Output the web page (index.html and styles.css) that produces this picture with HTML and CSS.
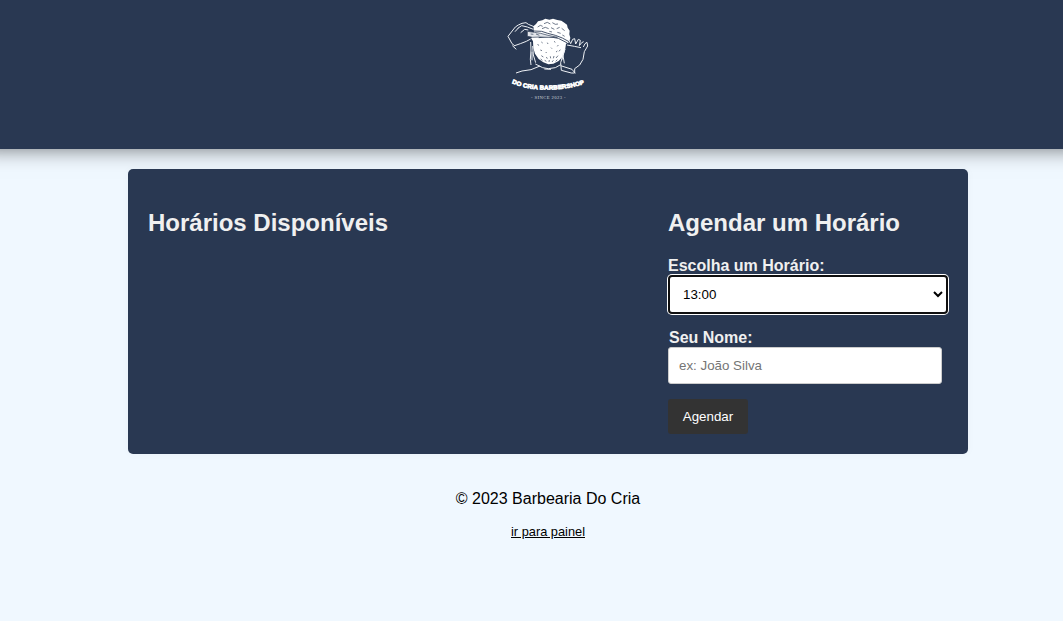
FILE: index.html
```html
<!DOCTYPE html>
<html lang="pt-BR">
<head>
<meta charset="utf-8">
<title>Barbearia Do Cria</title>
<link rel="stylesheet" href="styles.css">
</head>
<body>
<header class="header">
  <svg class="logo" viewBox="0 0 300 300" role="img" aria-label="Do Cria Barbershop">
    <path class="hair" d="M108 66 L106 49 L114 42 L120 34 L133 31 L142 26 L154 29 L165 26 L178 30 L190 32 L199 38 L207 44 L209 53 L215 62 L214 73 L217 84 L213 97 L204 101 L201 122 L194 140 L182 153 L166 161 L151 163 L136 157 L122 147 L111 131 L106 114 L105 94 L99 84 L108 78Z"/>
    <g class="shade">
      <path d="M108 63 L131 64 L149 70 L172 76 L193 84 L213 95 M122 83 L152 80 L181 85 L208 99"/>
      <path class="fleck" d="M119 51 l8-5 7 3 M138 41 l10-4 9 5 M163 38 l9 5 8-1 M132 56 l10-4 10 4 M159 53 l10 5 M176 56 l9-4 M191 55 l9 7 M154 64 l8 2 M178 67 l10 3 M193 75 l7 4 M119 102 l3 5 M130 96 l4 3 M148 98 l2 4 M168 94 l4 3 M181 105 l-3 4 M159 113 l3 3 M127 120 l5 2 M143 126 l3 3 M174 126 l4-3 M187 119 l-4 5 M130 137 l6 4 M145 141 l3 5 M157 139 l1 6 M168 138 l-2 7 M180 137 l-6 7 M140 151 l5 3 M154 150 l-1 6 M166 151 l-4 5 M128 147 l5 4 M178 149 l-5 5"/>
    </g>
    <path class="tool" d="M88 64 L109 67 L128 70 L150 76 L178 82 L150 82 L126 81 L104 82 L88 79Z"/>
    <path class="shade fleck" d="M98 72 L106 73 M114 72 L124 76"/>
    <g class="line">
      <path d="M30 79 L52 51 L61 45 L72 40 L84 38 L91 43 L108 50 M59 55 L71 47 L88 51 L106 58 M51 65 L61 54 M68 68 L80 58 L91 60 M30 79 L42 101 L51 108 M43 107 L55 118 M50 107 L67 101 L85 94 L98 87"/>
      <path d="M98 96 L99 120 L97 148 L99 165 M104 108 L106 135 L113 158 M102 125 L102 151 M54 189 L72 183 L99 179 L126 168 M112 162 L134 173 L151 176 L172 173 L188 164 M139 177 L159 178"/>
      <path d="M197 129 L188 158 L190 181 L220 189 L230 189 L230 176 L245 165 L255 148 L259 125 L269 108 L267 97 L261 101 L256 111 M207 105 L229 109 L249 113 M195 137 L199 160 M201 117 L191 151 M188 167 L222 178 L232 190 M213 91 L218 101 L224 88 L230 86 L233 102 L241 88 L247 91 L244 107 L251 98 L257 95"/>
    </g>
    <defs><path id="brand-curve" d="M39 219 Q92 241 150 239 Q207 239 261 221"/></defs>
    <text class="brand"><textPath href="#brand-curve" startOffset="50%" textLength="222" lengthAdjust="spacingAndGlyphs">DO CRIA BARBERSHOP</textPath></text>
    <text class="since" x="151" y="266" textLength="104">- SINCE 2023 -</text>
  </svg>
</header>
<main class="page">
  <div class="card">
    <section class="available"><h2>Horários Disponíveis</h2></section>
    <section class="booking">
      <h2>Agendar um Horário</h2>
      <form>
        <label for="time">Escolha um Horário:</label>
        <select id="time" class="time"><option>13:00</option></select>
        <label class="name-label" for="name">Seu Nome:</label>
        <input id="name" class="name" type="text" placeholder="ex: João Silva">
        <button class="submit" type="button">Agendar</button>
      </form>
    </section>
  </div>
  <footer class="footer">
    <p>© 2023 Barbearia Do Cria</p>
    <a href="#">ir para painel</a>
  </footer>
</main>
</body>
</html>
```
FILE: styles.css
```css
* { box-sizing: border-box; }
body { margin: 0; background: #f0f8ff; font-family: "Liberation Sans", Arial, sans-serif; font-size: 16px; color: #000; }
.header { height: 149px; padding: 10px 0 0 33px; background: #293852; box-shadow: 0 -20px 20px 20px rgba(0,0,0,.55); display: flex; justify-content: center; align-items: flex-start; }
.logo { width: 100px; height: 100px; }
.hair { fill: #fff; }
.shade { fill: none; stroke: #293852; stroke-width: 2.6; }
.fleck { stroke-width: 2; }
.tool { fill: #e3e6eb; stroke: #293852; stroke-width: 2; }
.line { fill: none; stroke: #eef1f5; stroke-width: 3; stroke-linejoin: round; }
.brand { fill: #fff; stroke: #fff; stroke-width: 2; font-size: 18px; font-weight: bold; text-anchor: middle; }
.since { fill: #d3d8df; font-family: "Liberation Serif", serif; font-size: 14px; text-anchor: middle; }
.page { width: 840px; margin: 20px 0 0 128px; }
.card { height: 285px; padding: 40px 20px 20px; border-radius: 5px; background: #293852; box-shadow: 0 0 10px rgba(0,0,0,.03); color: #f0f0f0; display: grid; grid-template-columns: 520px 280px; }
h2 { margin: 0 0 21px; font-size: 24px; line-height: 27px; }
form { display: flex; flex-direction: column; align-items: flex-start; }
label { font-weight: bold; line-height: 18px; }
.time { width: 280px; height: 39px; margin: 0 0 15px; padding: 0 0 0 9px; border: 2px solid #101010; border-radius: 4px; background: #fff; box-shadow: 0 0 0 1px #fff; color: #000; font: 13.333px "Liberation Sans", Arial, sans-serif; }
.name-label { padding-left: 1px; }
.name { width: 274px; height: 37px; padding: 10px; border: 1px solid #ccc; border-radius: 3px; background: #fff; font: 13.333px "Liberation Sans", Arial, sans-serif; }
.name::placeholder { color: #757575; }
.submit { width: 80px; height: 35px; margin-top: 15px; padding: 0; border: 0; border-radius: 3px; background: #333; color: #fff; font: 13.333px "Liberation Sans", Arial, sans-serif; }
.footer { padding-top: 36px; text-align: center; }
.footer p { margin: 0 0 15px; line-height: 18px; }
.footer a { display: block; font-size: 12.8px; line-height: 18px; color: #000; }
```
